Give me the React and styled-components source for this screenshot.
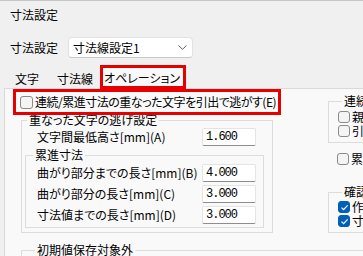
import React from "react";
import styled, { createGlobalStyle } from "styled-components";

const GlobalStyle = createGlobalStyle`
  html, body {
    margin: 0;
    padding: 0;
  }
  body {
    background: #f0f0f0;
    font-family: "Noto Sans CJK JP", "Noto Sans", sans-serif;
    font-size: 12px;
    font-feature-settings: "palt";
    color: #000;
  }
`;

export default function App() {
  return (
    <Window>
      <GlobalStyle />
      <TitleBar>寸法設定</TitleBar>
      <SettingRow>
        <RowLabel>寸法設定</RowLabel>
        <Combo>
          <span>寸法線設定1</span>
          <svg width="9" height="5" viewBox="0 0 9 5">
            <polyline points="0.5,0.5 4.5,4.3 8.5,0.5" fill="none" stroke="#5f5f5f" strokeWidth="1" />
          </svg>
        </Combo>
      </SettingRow>
      <TabStrip>
        <Tab>文字</Tab>
        <Tab>寸法線</Tab>
        <Tab $active>
          オペレーション
          <TabMark />
        </Tab>
      </TabStrip>
      <Panel>
        <Columns>
          <LeftColumn>
            <OptionRow>
              <CheckBox $size={13} />
              <OptionText>連続/累進寸法の重なった文字を引出で逃がす(E)</OptionText>
            </OptionRow>
            <GroupBox $margin="-2px 0 0 8px" $width="252px" $pad="0 0 4px 0">
              <Legend $indent={5}>重なった文字の逃げ設定</Legend>
              <FieldRow $indent={15} $h={20}>
                <span>文字間最低高さ[mm](A)</span>
                <NumInput>1.600</NumInput>
              </FieldRow>
              <GroupBox $margin="1px 8px 0 3px" $pad="0 0 2px 0">
                <Legend $indent={7}>累進寸法</Legend>
                <FieldRow $indent={11} $h={21}>
                  <span>曲がり部分までの長さ[mm](B)</span>
                  <NumInput>4.000</NumInput>
                </FieldRow>
                <FieldRow $indent={11} $h={21}>
                  <span>曲がり部分の長さ[mm](C)</span>
                  <NumInput>3.000</NumInput>
                </FieldRow>
                <FieldRow $indent={11} $h={21}>
                  <span>寸法値までの長さ[mm](D)</span>
                  <NumInput>3.000</NumInput>
                </FieldRow>
              </GroupBox>
            </GroupBox>
          </LeftColumn>
          <RightColumn>
            <GroupBox $margin="5px 0 0 0" $pad="2px 0 4px 9px">
              <Legend $indent={4}>連続寸法</Legend>
              <CheckRow>
                <CheckBox />
                <span>親寸法に追従する</span>
              </CheckRow>
              <CheckRow>
                <CheckBox />
                <span>引出線を表示する</span>
              </CheckRow>
            </GroupBox>
            <CheckRow $margin="9px 0 0 9px">
              <CheckBox />
              <span>累進寸法の起点を表示する</span>
            </CheckRow>
            <GroupBox $margin="19px 0 0 0" $pad="1px 0 4px 9px">
              <Legend $indent={4}>確認メッセージ</Legend>
              <CheckRow>
                <CheckBox checked />
                <span>作図前に確認する</span>
              </CheckRow>
              <CheckRow>
                <CheckBox checked />
                <span>寸法値を確認する</span>
              </CheckRow>
            </GroupBox>
          </RightColumn>
        </Columns>
        <GroupBox $margin="10px 0 0 8px" $width="420px" $pad="2px 0 4px 9px">
          <Legend $indent={4}>初期値保存対象外</Legend>
          <CheckRow>
            <CheckBox />
            <span>寸法設定</span>
          </CheckRow>
        </GroupBox>
      </Panel>
    </Window>
  );
}

function CheckBox({ checked, $size }) {
  return (
    <Box $checked={checked} $size={$size}>
      {checked && (
        <svg width="9" height="9" viewBox="0 0 9 9">
          <polyline points="1.5,4.6 3.6,6.6 7.6,2.4" fill="none" stroke="#fff" strokeWidth="1.2" />
        </svg>
      )}
    </Box>
  );
}

const Window = styled.div`
  width: 363px;
  height: 256px;
  overflow: hidden;
  box-sizing: border-box;
  border-top: 1px solid #c6c6c6;
  display: flex;
  flex-direction: column;
  line-height: 14px;
`;

const TitleBar = styled.div`
  height: 27px;
  flex-shrink: 0;
  display: flex;
  align-items: center;
  padding-left: 10px;
`;

const SettingRow = styled.div`
  display: flex;
  align-items: center;
  flex-shrink: 0;
  gap: 10px;
  height: 21px;
  margin-top: 9px;
  padding-left: 10px;
`;

const RowLabel = styled.span`
  width: 48px;
  white-space: nowrap;
`;

const Combo = styled.div`
  width: 125px;
  height: 21px;
  box-sizing: border-box;
  background: #fff;
  border: 1px solid #e2e2e2;
  border-bottom-color: #c8c8c8;
  border-radius: 4px;
  display: flex;
  align-items: center;
  justify-content: space-between;
  padding: 0 5px 0 4px;
`;

const TabStrip = styled.div`
  display: flex;
  align-items: flex-end;
  flex-shrink: 0;
  height: 22px;
  margin-top: 8px;
  padding-left: 7px;
`;

const Tab = styled.div`
  position: relative;
  box-sizing: border-box;
  height: ${(p) => (p.$active ? "22px" : "20px")};
  display: flex;
  align-items: center;
  white-space: nowrap;
  padding: ${(p) => (p.$active ? "0 3px" : "0 7px")};
  margin: ${(p) => (p.$active ? "0 0 0 -3px" : "0 2px 0 0")};
  border: 1px solid ${(p) => (p.$active ? "#d9d9d9" : "transparent")};
  border-bottom: none;
  background: ${(p) => (p.$active ? "#f9f9f9" : "transparent")};
`;

const TabMark = styled.span`
  position: absolute;
  top: -2px;
  left: -1px;
  right: -3px;
  bottom: -1px;
  border: 3px solid #e60000;
`;

const Panel = styled.div`
  flex: 1;
  margin-left: 4px;
  border-top: 1px solid #d9d9d9;
  border-left: 1px solid #d9d9d9;
  background: #f9f9f9;
  padding-left: 8px;
`;

const Columns = styled.div`
  display: flex;
  align-items: flex-start;
`;

const LeftColumn = styled.div`
  width: 268px;
  flex-shrink: 0;
  display: flex;
  flex-direction: column;
`;

const RightColumn = styled.div`
  width: 220px;
  flex-shrink: 0;
  margin-left: 47px;
  display: flex;
  flex-direction: column;
`;

const OptionRow = styled.label`
  position: relative;
  z-index: 1;
  display: flex;
  align-items: center;
  gap: 2px;
  height: 26px;
  box-sizing: border-box;
  border: 3px solid #e60000;
  padding-left: 4px;
  white-space: nowrap;
`;

const OptionText = styled.span`
  letter-spacing: -0.5px;
`;

const GroupBox = styled.fieldset`
  margin: ${(p) => p.$margin || 0};
  padding: ${(p) => p.$pad || 0};
  width: ${(p) => p.$width || "auto"};
  box-sizing: border-box;
  min-width: 0;
  border: 1px solid #dcdcdc;
`;

const Legend = styled.legend`
  margin-left: ${(p) => p.$indent}px;
  padding: 0 2px;
  line-height: 14px;
  white-space: nowrap;
`;

const FieldRow = styled.div`
  display: grid;
  grid-template-columns: 165px 54px;
  align-items: center;
  height: ${(p) => p.$h}px;
  padding-left: ${(p) => p.$indent}px;
  white-space: nowrap;
`;

const NumInput = styled.div`
  height: 18px;
  box-sizing: border-box;
  background: #fff;
  border: 1px solid #e4e4e4;
  border-bottom: 1px solid #8d8d8d;
  border-radius: 2px;
  padding-left: 3px;
  display: flex;
  align-items: center;
  font-family: "Liberation Mono", "DejaVu Sans Mono", monospace;
  font-size: 12px;
  letter-spacing: -1px;
`;

const CheckRow = styled.div`
  display: flex;
  align-items: center;
  gap: 2px;
  height: 14px;
  margin: ${(p) => p.$margin || 0};
  white-space: nowrap;
`;

const Box = styled.span`
  width: ${(p) => p.$size || 12}px;
  height: ${(p) => p.$size || 12}px;
  flex-shrink: 0;
  box-sizing: border-box;
  border-radius: 3px;
  border: 1px solid ${(p) => (p.$checked ? "#005fb8" : "#8a8a8a")};
  background: ${(p) => (p.$checked ? "#005fb8" : "#f4f4f4")};
  display: inline-flex;
  align-items: center;
  justify-content: center;
`;
